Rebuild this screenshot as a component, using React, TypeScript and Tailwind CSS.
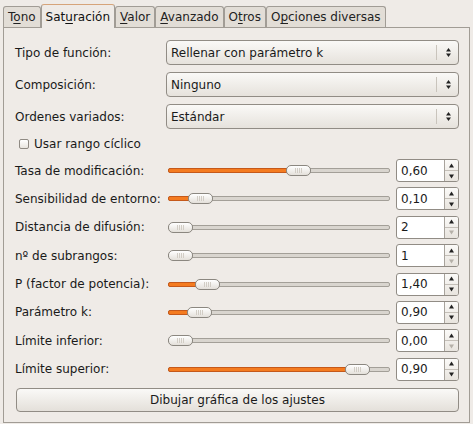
import React from 'react';

const font = { fontFamily: '"DejaVu Sans", "Liberation Sans", sans-serif' };

function Mn({ pre, u, post }: { pre: string; u: string; post: string }) {
  return (
    <span>
      {pre}
      <span className="underline underline-offset-2 decoration-1">{u}</span>
      {post}
    </span>
  );
}

const tabs = [
  { pre: 'T', u: 'o', post: 'no' },
  { pre: 'Sat', u: 'u', post: 'ración', active: true },
  { pre: '', u: 'V', post: 'alor' },
  { pre: '', u: 'A', post: 'vanzado' },
  { pre: 'O', u: 't', post: 'ros' },
  { pre: 'O', u: 'p', post: 'ciones diversas' },
];

function Combo({ value }: { value: string }) {
  return (
    <div className="flex h-[25px] w-[293px] items-center rounded-[4px] border border-[#918c85] bg-gradient-to-b from-[#faf9f7] to-[#e6e2dc] pl-[4px] pr-[6px]">
      <span className="flex-1 text-[12px] text-[#1a1a1a]">{value}</span>
      <div className="mr-[8px] h-[15px] w-px bg-[#c9c4bc]" />
      <Arrows />
    </div>
  );
}

function Arrows({ downOff }: { downOff?: boolean }) {
  return (
    <svg width="7" height="11" viewBox="0 0 7 11">
      <path d="M3.5 1 L6 4.5 L1 4.5 Z" fill="#222" />
      <path d="M1 6.5 L6 6.5 L3.5 10 Z" fill={downOff ? '#b5b0a8' : '#222'} />
    </svg>
  );
}

function Slider({ pos, fill }: { pos: number; fill: boolean }) {
  return (
    <div className="relative h-[23px] w-[222px]">
      <div className="absolute left-0 right-0 top-[9px] h-[5px] rounded-[2px] border border-[#a39f98] bg-[#d9d5cf]" />
      {fill && (
        <div
          className="absolute left-0 top-[9px] h-[5px] rounded-[2px] border border-[#c5591a] bg-[#f47b20]"
          style={{ width: pos + 6 }}
        />
      )}
      <div
        className="absolute top-[6px] flex h-[11px] w-[25px] items-center justify-center rounded-[5px] border border-[#8b8780] bg-gradient-to-b from-[#ffffff] to-[#e4e0da]"
        style={{ left: pos }}
      >
        <div className="h-[5px] w-[7px] bg-[repeating-linear-gradient(90deg,#d2cdc5_0px,#d2cdc5_1px,transparent_1px,transparent_2px)]" />
      </div>
    </div>
  );
}

function Spin({ value, downOff }: { value: string; downOff?: boolean }) {
  return (
    <div className="flex h-[23px] w-[63px] overflow-hidden rounded-[3px] border border-[#918c85] bg-white">
      <span className="flex flex-1 items-center pl-[4px] text-[12px] text-[#1a1a1a]">{value}</span>
      <div className="flex w-[14px] flex-col border-l border-[#a8a39c] bg-gradient-to-b from-[#fbfaf8] to-[#e8e4de]">
        <div className="flex flex-1 items-center justify-center border-b border-[#c4bfb8]">
          <svg width="7" height="5" viewBox="0 0 7 5">
            <path d="M3.5 0.5 L6 4.5 L1 4.5 Z" fill="#222" />
          </svg>
        </div>
        <div className="flex flex-1 items-center justify-center">
          <svg width="7" height="5" viewBox="0 0 7 5">
            <path d="M1 0.5 L6 0.5 L3.5 4.5 Z" fill={downOff ? '#b5b0a8' : '#222'} />
          </svg>
        </div>
      </div>
    </div>
  );
}

const sliders = [
  { label: 'Tasa de modificación:', pos: 118, fill: true, value: '0,60' },
  { label: 'Sensibilidad de entorno:', pos: 20, fill: true, value: '0,10' },
  { label: 'Distancia de difusión:', pos: 0, fill: false, value: '2', downOff: true },
  { label: 'nº de subrangos:', pos: 0, fill: false, value: '1', downOff: true },
  { label: 'P (factor de potencia):', pos: 27, fill: true, value: '1,40' },
  { label: 'Parámetro k:', pos: 19, fill: true, value: '0,90' },
  { label: 'Límite inferior:', pos: 0, fill: false, value: '0,00', downOff: true },
  { label: 'Límite superior:', pos: 177, fill: true, value: '0,90' },
];

export default function App() {
  return (
    <div className="h-[424px] w-[473px] bg-[#efebe7] pt-[4px]" style={font}>
      {/* tab strip */}
      <div className="flex h-[23px] items-end pl-[3px]">
        {tabs.map((t, i) =>
          t.active ? (
            <div
              key={i}
              className="relative z-10 -mb-px flex h-[24px] items-center rounded-t-[3px] border border-b-0 border-[#a19c95] border-t-[#d6a47a] bg-[#efebe7] px-[4px] text-[12px] text-[#111]"
            >
              <Mn {...t} />
            </div>
          ) : (
            <div
              key={i}
              className="flex h-[21px] items-center rounded-t-[3px] border border-b-0 border-[#a19c95] bg-[#e2ddd6] px-[4px] text-[12px] text-[#222]"
            >
              <Mn {...t} />
            </div>
          )
        )}
      </div>

      {/* page */}
      <div className="mx-[3px] flex h-[396px] flex-col border border-[#a19c95] pl-[11px] pr-[10px] pt-[12px] text-[12px] text-[#1a1a1a]">
        <div className="flex flex-col gap-[7px]">
          <div className="flex items-center justify-between">
            <span>Tipo de función:</span>
            <Combo value="Rellenar con parámetro k" />
          </div>
          <div className="flex items-center justify-between">
            <span>Composición:</span>
            <Combo value="Ninguno" />
          </div>
          <div className="flex items-center justify-between">
            <span>Ordenes variados:</span>
            <Combo value="Estándar" />
          </div>
        </div>

        <div className="mt-[6px] flex h-[18px] items-center gap-[5px] pl-[4px]">
          <div className="h-[10px] w-[10px] rounded-[2px] border border-[#8f8a83] bg-gradient-to-b from-white to-[#e9e5df]" />
          <span>Usar rango cíclico</span>
        </div>

        <div className="mt-[6px] flex flex-col gap-[5.4px]">
          {sliders.map((s) => (
            <div key={s.label} className="flex h-[23px] items-center">
              <span className="w-[153px]">{s.label}</span>
              <Slider pos={s.pos} fill={s.fill} />
              <div className="ml-auto">
                <Spin value={s.value} downOff={s.downOff} />
              </div>
            </div>
          ))}
        </div>

        <button className="mt-[7px] ml-[1px] flex h-[24px] w-[443px] items-center justify-center rounded-[4px] border border-[#918c85] bg-gradient-to-b from-[#faf9f7] to-[#e4e0da] text-[12px] text-[#1a1a1a]">
          Dibujar gráfica de los ajustes
        </button>
      </div>
    </div>
  );
}
